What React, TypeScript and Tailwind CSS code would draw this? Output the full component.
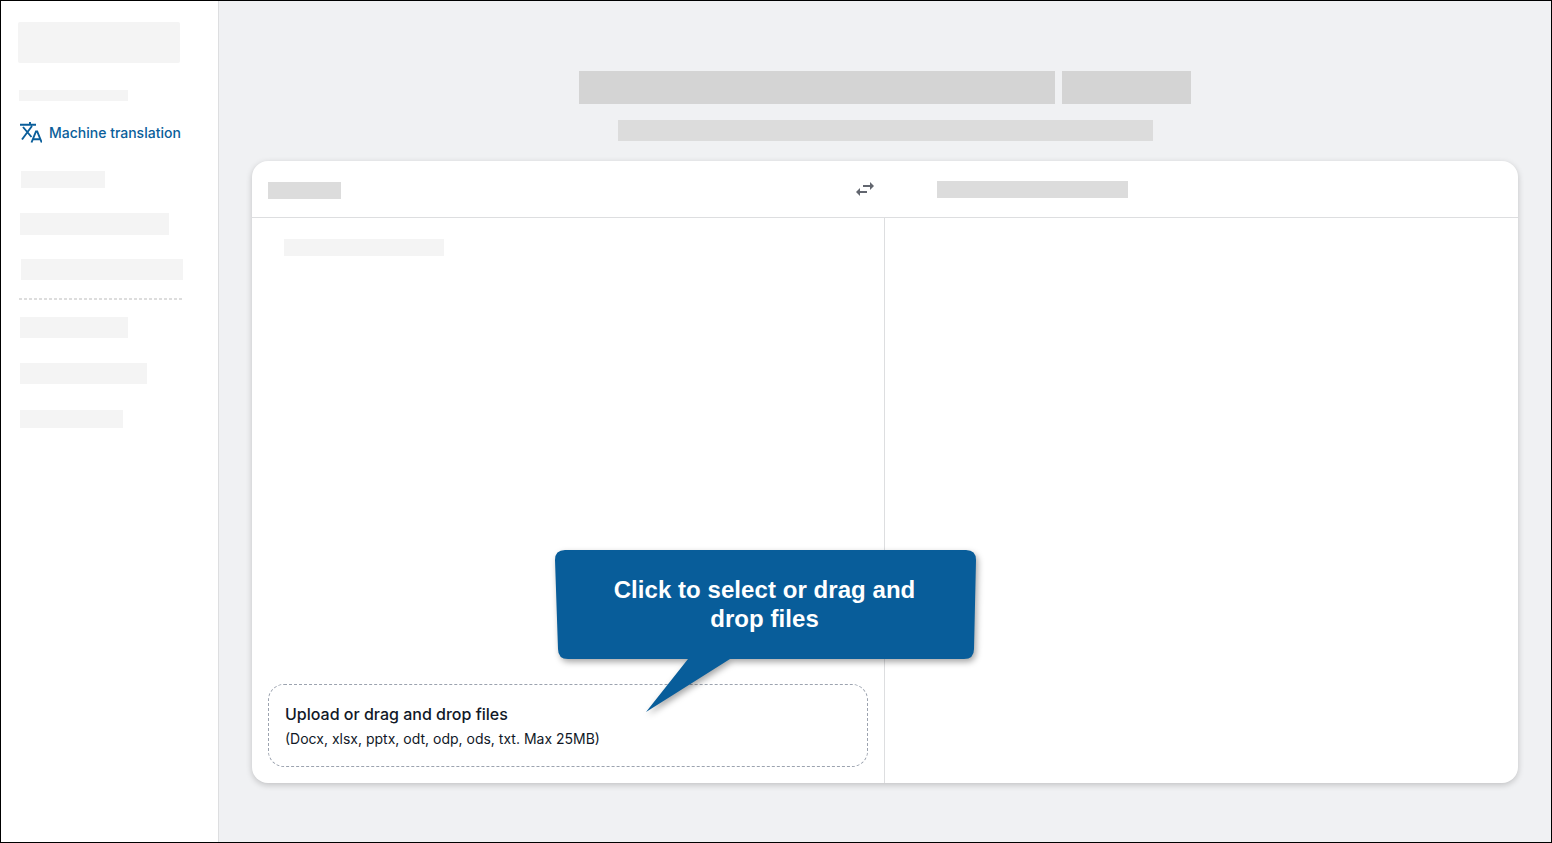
import React from 'react';

const TranslateIcon = () => (
  <svg width="22" height="22" viewBox="0 0 22 22" fill="none" stroke="#0a5e9a" strokeWidth="1.9" className="shrink-0">
    <path d="M0 2.700h16M10 0v2.700M3 5l8.500 10M12 4L2 17.500" />
    <path d="M11.500 20.500L16 9.500h1.200l4.500 11M13 17.200h7.500" />
  </svg>
);

const SwapIcon = () => (
  <svg width="20" height="16" viewBox="0 0 20 16" fill="#62666f">
    <path d="M8 4h7V1l4 4-4 4V6H8z" />
    <path d="M12 10H5V7l-4 4 4 4v-3h7z" />
  </svg>
);

const Sidebar = () => (
  <aside className="w-[218px] shrink-0 bg-white border-r border-[#dddee0] pt-[21px]">
    <div className="ml-[17px] w-[162px] h-[41px] rounded-[2px] bg-[#f4f4f4]" />
    <div className="ml-[18px] mt-[27px] w-[109px] h-[11px] bg-[#f4f4f4]" />
    <div className="ml-[19px] mt-[21px] h-[21px] flex items-center gap-[7px]">
      <TranslateIcon />
      <span className="text-[14px] font-medium text-[#0a5e9a] leading-none">Machine translation</span>
    </div>
    <div className="ml-[20px] mt-[28px] w-[84px] h-[17px] bg-[#f4f4f4]" />
    <div className="ml-[19px] mt-[25px] w-[149px] h-[22px] bg-[#f4f4f4]" />
    <div className="ml-[20px] mt-[24px] w-[162px] h-[21px] bg-[#f4f4f4]" />
    <div className="ml-[18px] mt-[18px] w-[165px] h-[2px] bg-[repeating-linear-gradient(90deg,#dddddd_0_3px,transparent_3px_5px)]" />
    <div className="ml-[19px] mt-[17px] w-[108px] h-[21px] bg-[#f4f4f4]" />
    <div className="ml-[19px] mt-[25px] w-[127px] h-[21px] bg-[#f4f4f4]" />
    <div className="ml-[19px] mt-[26px] w-[103px] h-[18px] bg-[#f4f4f4]" />
  </aside>
);

const Callout = () => (
  <div className="absolute left-[554px] top-[549px] w-[421px] h-[162px]">
    <svg width="421" height="162" viewBox="0 0 421 162" className="absolute inset-0 overflow-visible drop-shadow-[2px_3px_3px_rgba(0,0,0,0.35)]">
      <path
        d="M10 0H411Q421 0 421 10L419 99Q419 109 409 109H175L91 162L133 109H13Q3 109 3 99L0 10Q0 0 10 0Z"
        fill="#085d9a"
      />
    </svg>
    <p className="relative w-[421px] pt-[25px] pl-[39px] pr-[41px] text-center text-white font-bold text-[24px] leading-[29px] tracking-[0.06px] font-['Liberation_Sans',sans-serif]">
      Click to select or drag and drop files
    </p>
  </div>
);

export default function App() {
  return (
    <div className="relative h-[843px] w-[1552px] flex overflow-hidden border border-black bg-[#f0f1f3] font-['Inter',sans-serif]">
      <Sidebar />
      <main className="flex-1 min-w-0 pl-[33px] pr-[33px] pt-[70px]">
        <div className="flex justify-center gap-[7px]">
          <div className="w-[476px] h-[33px] bg-[#d4d4d4]" />
          <div className="w-[129px] h-[33px] bg-[#d4d4d4]" />
        </div>
        <div className="ml-[366px] mt-[16px] w-[535px] h-[21px] bg-[#dcdcdc]" />
        <section className="mt-[20px] h-[622px] rounded-[16px] bg-white flex flex-col shadow-[0_2px_6px_rgba(0,0,0,0.2)]">
          <header className="h-[57px] shrink-0 flex items-center border-b border-[#dddee0]">
            <div className="ml-[16px] mt-[2px] w-[73px] h-[17px] bg-[#dcdcdc]" />
            <div className="ml-[514px]"><SwapIcon /></div>
            <div className="ml-[62px] w-[191px] h-[17px] bg-[#dcdcdc]" />
          </header>
          <div className="flex-1 flex min-h-0">
            <div className="w-[633px] flex flex-col justify-between border-r border-[#dddee0] pl-[16px] pr-[16px] pt-[21px] pb-[16px]">
              <div className="ml-[16px] w-[160px] h-[17px] bg-[#f4f4f4]" />
              <div className="w-[600px] h-[83px] rounded-[16px] border border-dashed border-[#9ca3af] pl-[16px] flex flex-col justify-center">
                <p className="text-[16px] leading-[24px] font-medium text-[#111827]">Upload or drag and drop files</p>
                <p className="mt-[1px] -mb-[1px] text-[14px] leading-[24px] text-[#111827]">(Docx, xlsx, pptx, odt, odp, ods, txt. Max 25MB)</p>
              </div>
            </div>
            <div className="flex-1" />
          </div>
        </section>
      </main>
      <Callout />
    </div>
  );
}
